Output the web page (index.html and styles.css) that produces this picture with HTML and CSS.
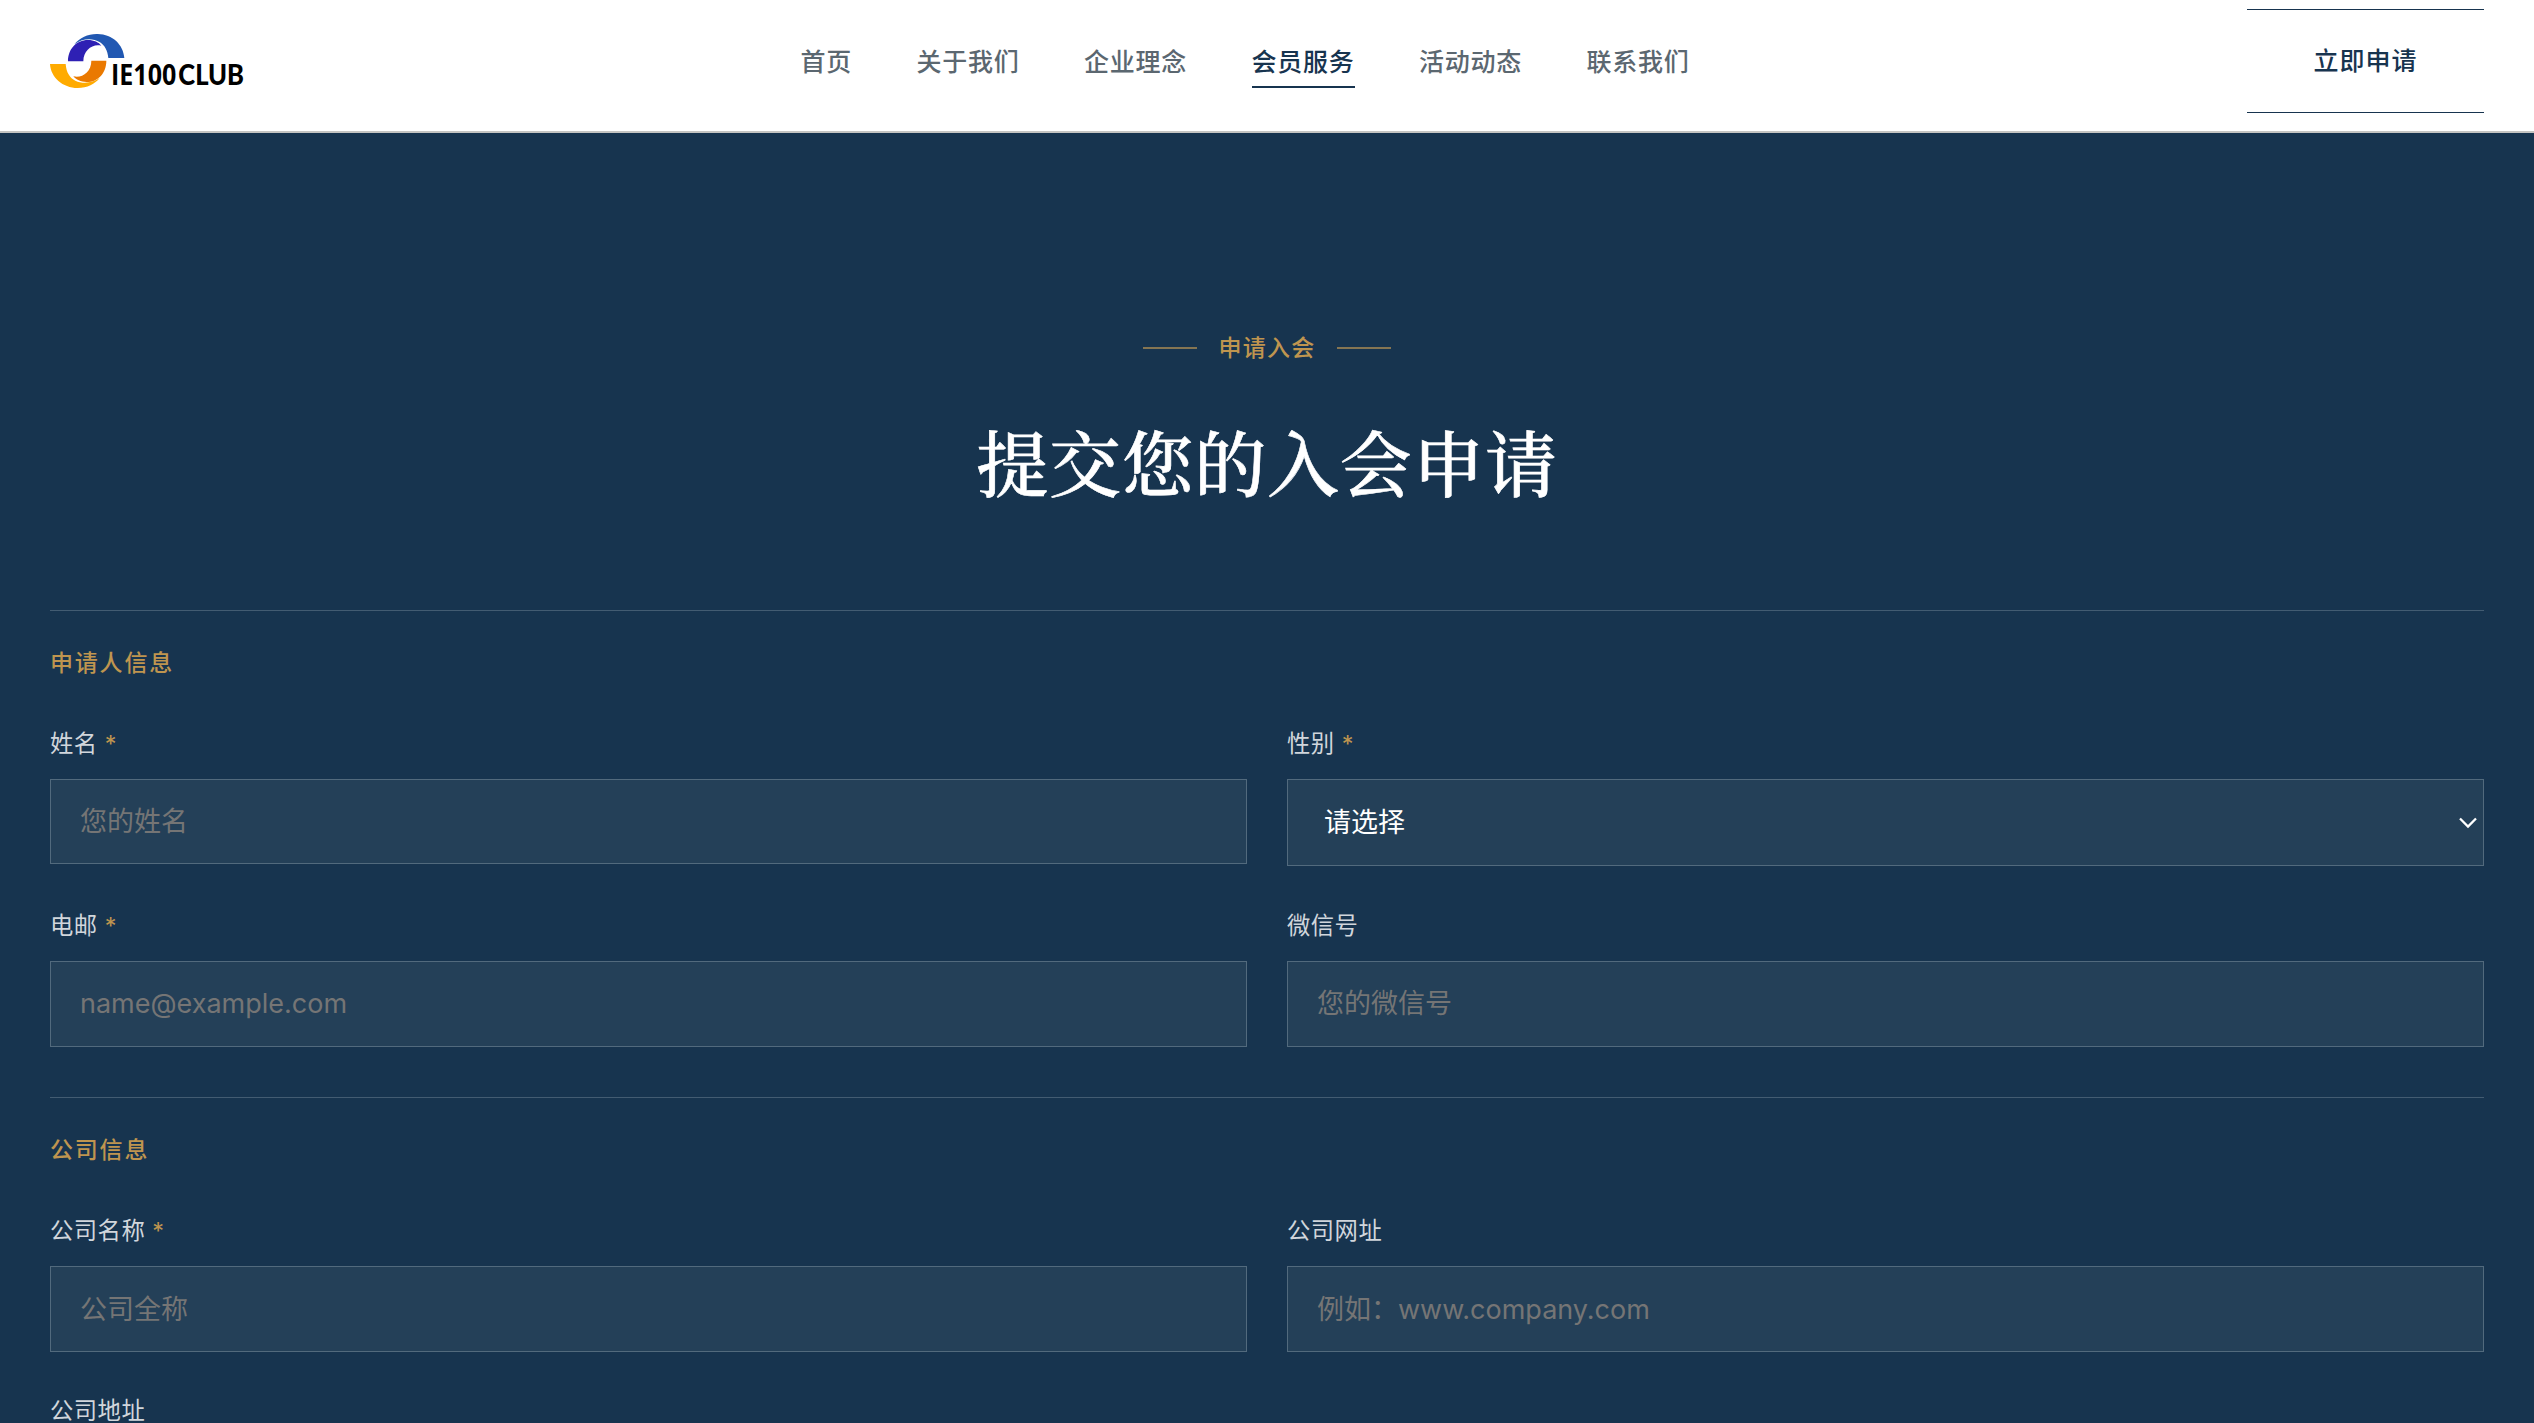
FILE: index.html
```html
<!DOCTYPE html>
<html lang="zh-CN">
<head>
<meta charset="utf-8">
<title>IE100 CLUB</title>
<link rel="stylesheet" href="styles.css">
</head>
<body>
<header class="header">
  <a class="logo" aria-label="IE100 CLUB">
    <svg width="195" height="56" viewBox="60 39 585 168">
      <path fill="#2158b2" d="M133 73C150 52 175 41 203 42C248 43 280 74 283 114L235 114C233 92 224 76 210 67C185 52 155 57 133 73Z"/>
      <path fill="#2e20b4" d="M114 124C114 88 138 60 174 60C192 60 206 67 214 77C188 70 160 90 160 124Z"/>
      <path fill="#ffab00" d="M60 132L107 132C109 158 120 174 136 182C160 193 188 188 209 174C195 192 172 204 143 204C98 204 62 172 60 132Z"/>
      <path fill="#ea7900" d="M229 122C229 158 205 186 170 186C152 186 138 179 130 169C155 176 184 156 184 122Z"/>
      <text class="logo-text logo-num" x="243" y="194" textLength="196" lengthAdjust="spacingAndGlyphs">IE100</text>
      <text class="logo-text" x="445" y="194" textLength="197" lengthAdjust="spacingAndGlyphs">CLUB</text>
    </svg>
  </a>
  <nav class="nav">
    <a class="nav-link">首页</a>
    <a class="nav-link">关于我们</a>
    <a class="nav-link">企业理念</a>
    <a class="nav-link active">会员服务</a>
    <a class="nav-link">活动动态</a>
    <a class="nav-link">联系我们</a>
  </nav>
  <a class="apply">立即申请</a>
</header>
<main class="main">
  <div class="eyebrow"><span class="eyebrow-text">申请入会</span></div>
  <h1 class="title">提交您的入会申请</h1>
  <form class="form">
    <section class="section">
      <h2 class="section-title">申请人信息</h2>
      <div class="grid">
        <div class="field"><label class="label">姓名 <span class="req">*</span></label><input class="input input-first" placeholder="您的姓名"></div>
        <div class="field"><label class="label">性别 <span class="req">*</span></label>
          <div class="select"><span class="select-value">请选择</span><svg width="18" height="12" viewBox="0 0 18 12"><path d="M1 1.5L9 9.5L17 1.5" fill="none" stroke="#fff" stroke-width="2.3"/></svg></div>
        </div>
        <div class="field"><label class="label">电邮 <span class="req">*</span></label><input class="input" placeholder="name@example.com"></div>
        <div class="field"><label class="label">微信号</label><input class="input" placeholder="您的微信号"></div>
      </div>
    </section>
    <section class="section">
      <h2 class="section-title">公司信息</h2>
      <div class="grid">
        <div class="field"><label class="label">公司名称 <span class="req">*</span></label><input class="input input-company" placeholder="公司全称"></div>
        <div class="field"><label class="label">公司网址</label><input class="input input-company" placeholder="例如：www.company.com"></div>
        <div class="field"><label class="label">公司地址</label></div>
      </div>
    </section>
  </form>
</main>
</body>
</html>
```
FILE: styles.css
```css
* { box-sizing: border-box; }
html, body { height: 100%; }
body {
  margin: 0;
  overflow: hidden;
  background: #17344f;
  font-family: Inter, "Noto Sans CJK SC", sans-serif;
}
.header {
  display: flex;
  justify-content: space-between;
  align-items: center;
  height: 133px;
  padding: 9px 50px 18px;
  background: #fff;
  border-bottom: 2px solid #c4c4c2;
}
.logo { display: flex; }
.logo svg { overflow: visible; }
.logo-text {
  font-family: Lato, sans-serif;
  font-weight: 900;
  font-size: 86px;
  fill: #000;
}
.logo-num {
  font-family: "Open Sans", sans-serif;
  font-weight: 700;
}
.nav { display: flex; gap: 64.5px; margin-left: -2px; }
.nav-link {
  padding: 9px 0 5px;
  border-bottom: 2px solid transparent;
  color: #5b6770;
  font-size: 25px;
  font-weight: 500;
  line-height: 38px;
  letter-spacing: .75px;
}
.nav-link.active { color: #17344f; border-color: #17344f; }
.apply {
  width: 237px;
  height: 104px;
  border: solid #17344f;
  border-width: 1px 0;
  color: #17344f;
  font-size: 25px;
  font-weight: 500;
  line-height: 102px;
  letter-spacing: 1px;
  text-align: center;
}
.main { padding: 196px 50px 0; }
.eyebrow {
  display: flex;
  justify-content: center;
  align-items: center;
  gap: 22px;
  height: 38px;
  color: #bf954f;
  font-size: 23px;
  font-weight: 500;
  letter-spacing: 1.2px;
}
.eyebrow-text { padding-bottom: 4px; }
.eyebrow::before, .eyebrow::after {
  content: "";
  width: 54px;
  height: 2px;
  background: #857552;
}
.title {
  margin: 46px 0 0;
  height: 98px;
  color: #fff;
  font-family: "Noto Serif CJK SC", "Noto Serif SC", serif;
  font-size: 72px;
  font-weight: 500;
  line-height: 94px;
  letter-spacing: .7px;
  text-align: center;
  -webkit-text-stroke: .6px #fff;
}
.form { padding-top: 99px; }
.section {
  padding: 34px 0 50px;
  border-top: 1px solid #435c72;
}
.section-title {
  margin: 0 0 45px;
  color: #bf954f;
  font-size: 23px;
  font-weight: 500;
  line-height: 36px;
  letter-spacing: 1.8px;
}
.grid {
  display: grid;
  grid-template-columns: 1fr 1fr;
  gap: 41px 40px;
}
.field { display: flex; flex-direction: column; gap: 17px; }
.label {
  color: #d1d6dc;
  font-size: 23.33px;
  line-height: 36px;
  letter-spacing: .47px;
}
.req { color: #bf954f; }
.input, .select {
  width: 100%;
  height: 86px;
  border: 1px solid #526a7d;
  border-radius: 0;
  background: #244058;
  color: #fff;
  font: 27px Inter, "Noto Sans CJK SC", sans-serif;
}
.input { padding: 0 29px 1px; }
.input-first { height: 85px; padding-bottom: 0; }
.input-company { padding-bottom: 0; }
.input::placeholder { color: #757575; }
.select {
  display: flex;
  align-items: center;
  justify-content: space-between;
  height: 87px;
  margin-bottom: 1px;
  padding: 0 6px 0 36px;
}
.select-value { padding-bottom: 4px; }
```
